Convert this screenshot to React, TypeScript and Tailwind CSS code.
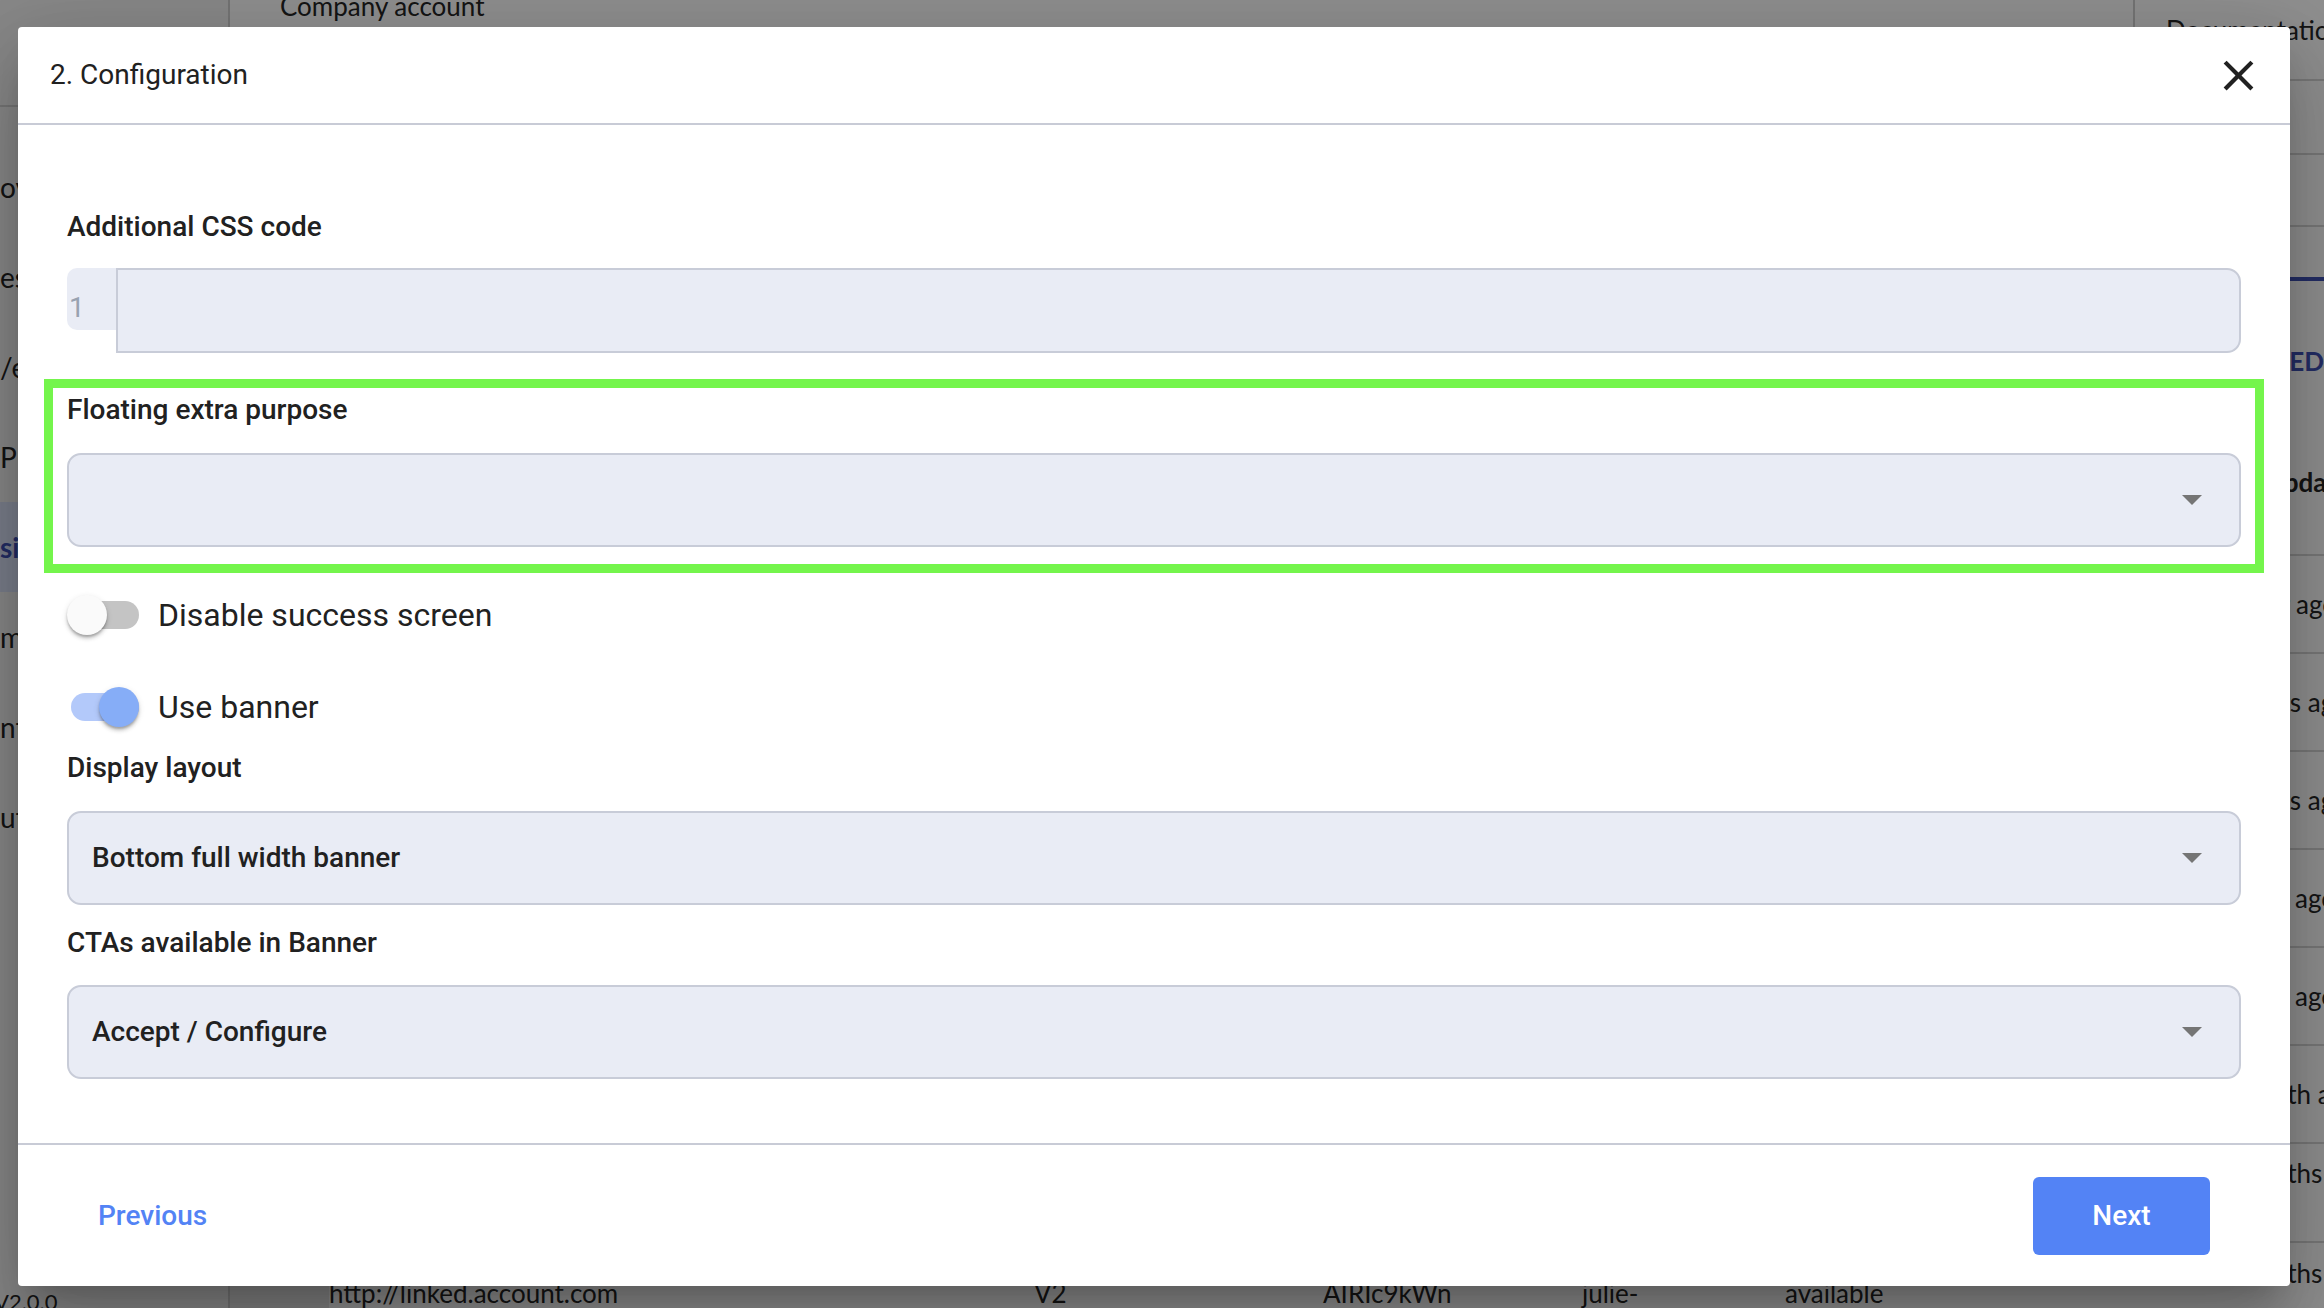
import React from "react";

function Label({ children }: { children: React.ReactNode }) {
  return <div className="h-[42px] text-[28px] font-medium leading-[42px] text-[#212121]">{children}</div>;
}

function Arrow() {
  return (
    <svg width="20" height="10" viewBox="0 0 20 10" className="shrink-0">
      <path d="M0 0H20L10 10Z" fill="#757575" />
    </svg>
  );
}

function Select({ value }: { value?: string }) {
  return (
    <div className="flex h-[94px] items-center justify-between rounded-[14px] border-2 border-[#c8ccd8] bg-[#e9ecf5] pl-[23px] pr-[37px]">
      <span className="text-[28px] font-medium text-[#212121]">{value ?? ""}</span>
      <Arrow />
    </div>
  );
}

function Toggle({ on, label }: { on: boolean; label: string }) {
  return (
    <div className="flex h-[56px] items-center gap-[19px]">
      <div className="relative h-[40px] w-[72px] shrink-0">
        <div
          className={
            on
              ? "absolute left-[4px] top-[6px] h-[28px] w-[68px] rounded-full bg-[#b3c9fa]"
              : "absolute left-[4px] top-[6px] h-[28px] w-[68px] rounded-full bg-[#c4c4c4]"
          }
        />
        <div
          className={
            on
              ? "absolute left-[32px] top-0 h-[40px] w-[40px] rounded-full bg-[#86adf7] shadow-[0_4px_4px_-1px_rgba(0,0,0,0.2),0_2px_2px_0_rgba(0,0,0,0.14),0_2px_6px_0_rgba(0,0,0,0.12)]"
              : "absolute left-0 top-0 h-[40px] w-[40px] rounded-full bg-[#fafafa] shadow-[0_4px_4px_-1px_rgba(0,0,0,0.2),0_2px_2px_0_rgba(0,0,0,0.14),0_2px_6px_0_rgba(0,0,0,0.12)]"
          }
        />
      </div>
      <span className="text-[32px] text-[#212121]">{label}</span>
    </div>
  );
}

function Background() {
  const nav = ["overview", "essentials", "/embed", "Publish", "sites", "modules", "ntegrations", "utilities"];
  const rows: { c: string[] }[] = [
    { c: ["", "", "", "", "", "", "1 hour ago"] },
    { c: ["", "", "", "", "", "", "3 hours ago"] },
    { c: ["", "", "", "", "", "", "5 hours ago"] },
    { c: ["", "", "", "", "", "", "2 days ago"] },
    { c: ["", "", "", "", "", "", "3 days ago"] },
    { c: ["", "", "", "", "", "", "1 month ago"] },
  ];
  return (
    <div className="flex h-full w-full bg-white font-['Lato',sans-serif] text-[#262626]">
      <aside className="flex w-[230px] shrink-0 flex-col border-r-2 border-[#cfcfcf] bg-[#f3f3f3]">
        <div className="h-[107px] shrink-0 border-b-2 border-[#d2d2d2]" />
        <div className="flex flex-col pt-[35px]">
          {nav.map((t, i) => (
            <div
              key={i}
              className={
                i === 4
                  ? "flex h-[90px] items-center whitespace-nowrap bg-[#dbe2fa] text-[28px] font-bold text-[#3f51b5]"
                  : "flex h-[90px] items-center whitespace-nowrap text-[28px]"
              }
            >
              {t}
            </div>
          ))}
        </div>
        <div className="-mb-[10px] -ml-[6px] mt-auto text-[22px] leading-[32px]">V2.0.0</div>
      </aside>
      <main className="flex min-w-0 flex-1 flex-col overflow-hidden">
        <div className="flex h-[81px] shrink-0 border-b-2 border-[#d6d6d6]">
          <div className="flex-1 pl-[50px]">
            <div className="-mt-[10px] text-[26px] leading-[32px]">Company account</div>
          </div>
          <div className="w-[191px] shrink-0 whitespace-nowrap border-l-2 border-[#cfcfcf] pl-[31px] pt-[14px] text-[26px] leading-[32px]">
            Documentation
          </div>
        </div>
        <div className="h-[74px] shrink-0 border-b-2 border-[#d6d6d6]" />
        <div className="h-[72px] shrink-0 border-b-2 border-[#d6d6d6]" />
        <div className="flex h-[54px] shrink-0 justify-end">
          <div className="w-[260px] border-b-4 border-[#3f51b5]" />
        </div>
        <div className="flex h-[129px] shrink-0 justify-end pt-[64px]">
          <div className="whitespace-nowrap text-[26px] font-bold leading-[32px] text-[#3f51b5]">PUBLISHED</div>
        </div>
        <div className="grid h-[146px] shrink-0 grid-cols-[99px_705px_289px_259px_203px_208px_222px_1fr] items-center border-b-2 border-[#d6d6d6] text-[26px] font-bold">
          <div /><div>Link</div><div>Version</div><div>Key</div><div>Owner</div><div>Status</div><div>Created</div>
          <div className="whitespace-nowrap">Last update</div>
        </div>
        {rows.map((r, i) => (
          <div
            key={i}
            className="grid h-[98px] shrink-0 grid-cols-[99px_705px_289px_259px_203px_208px_222px_1fr] items-center border-b-2 border-[#d6d6d6] text-[26px]"
          >
            <div className="h-full bg-[#e9e9e9]" />
            {r.c.map((c, j) => (
              <div key={j} className="whitespace-nowrap">{c}</div>
            ))}
          </div>
        ))}
        <div className="grid h-[99px] shrink-0 grid-cols-[99px_705px_289px_259px_203px_208px_222px_1fr] items-center border-b-2 border-[#d6d6d6] text-[26px] leading-[40px]">
          <div className="h-full bg-[#e9e9e9]" />
          <div /><div /><div /><div /><div /><div />
          <div className="whitespace-nowrap">2 months<br />ago</div>
        </div>
        <div className="grid h-[99px] shrink-0 grid-cols-[99px_705px_289px_259px_203px_208px_222px_1fr] items-center text-[26px] leading-[40px]">
          <div className="h-full bg-[#e9e9e9]" />
          <div>http://linked.account.com</div>
          <div>V2</div>
          <div>AIRIc9kWn</div>
          <div>julie-</div>
          <div>available</div>
          <div className="whitespace-nowrap">2 months<br />ago</div>
          <div className="whitespace-nowrap">2 months<br />ago</div>
        </div>
      </main>
    </div>
  );
}

export default function App() {
  return (
    <div className="relative h-[1308px] w-[2324px] overflow-hidden">
      <Background />
      <div className="absolute inset-0 bg-black/[0.44]" />
      <div className="absolute left-[18px] top-[27px] flex h-[1259px] w-[2272px] flex-col rounded-[4px] bg-white font-['Roboto',sans-serif] shadow-[0_22px_30px_-14px_rgba(0,0,0,0.2),0_48px_76px_6px_rgba(0,0,0,0.14),0_18px_92px_16px_rgba(0,0,0,0.12)]">
        <div className="flex h-[98px] shrink-0 items-center justify-between border-b-2 border-[#c8cbd6] pl-[32px] pr-[26px]">
          <span className="text-[28px] text-[#212121]">2. Configuration</span>
          <svg viewBox="0 0 24 24" className="h-[51px] w-[51px]" fill="#212121">
            <path d="M19 6.41L17.59 5 12 10.59 6.41 5 5 6.41 10.59 12 5 17.59 6.41 19 12 13.41 17.59 19 19 17.59 13.41 12z" />
          </svg>
        </div>
        <div className="flex min-h-0 flex-1 flex-col px-[49px] pt-[81px]">
          <Label>Additional CSS code</Label>
          <div className="mt-[20px] flex h-[85px]">
            <div className="flex h-[62px] w-[49px] shrink-0 items-end rounded-l-[10px] bg-[#e9ecf5] pb-[8px] pl-[2px] text-[28px] leading-[28px] text-[#98a2b0]">
              1
            </div>
            <div className="h-[85px] flex-1 rounded-r-[14px] border-2 border-[#c8ccd8] bg-[#e9ecf5]" />
          </div>
          <div className="-mx-[23px] mt-[26px] border-[9px] border-[#74f54c] px-[14px] pb-[17px] pt-[1px]">
            <Label>Floating extra purpose</Label>
            <div className="mt-[22px]">
              <Select />
            </div>
          </div>
          <div className="mt-[14px]">
            <Toggle on={false} label="Disable success screen" />
          </div>
          <div className="mt-[36px]">
            <Toggle on={true} label="Use banner" />
          </div>
          <div className="mt-[12px]">
            <Label>Display layout</Label>
          </div>
          <div className="mt-[22px]">
            <Select value="Bottom full width banner" />
          </div>
          <div className="mt-[17px]">
            <Label>CTAs available in Banner</Label>
          </div>
          <div className="mt-[21px]">
            <Select value="Accept / Configure" />
          </div>
        </div>
        <div className="flex h-[143px] shrink-0 items-center justify-between border-t-2 border-[#c8cbd6] px-[80px]">
          <span className="text-[28px] font-medium text-[#5383f5]">Previous</span>
          <button className="flex h-[78px] w-[177px] items-center justify-center rounded-[6px] bg-[#5383f5] text-[28px] font-medium text-white">
            Next
          </button>
        </div>
      </div>
    </div>
  );
}
